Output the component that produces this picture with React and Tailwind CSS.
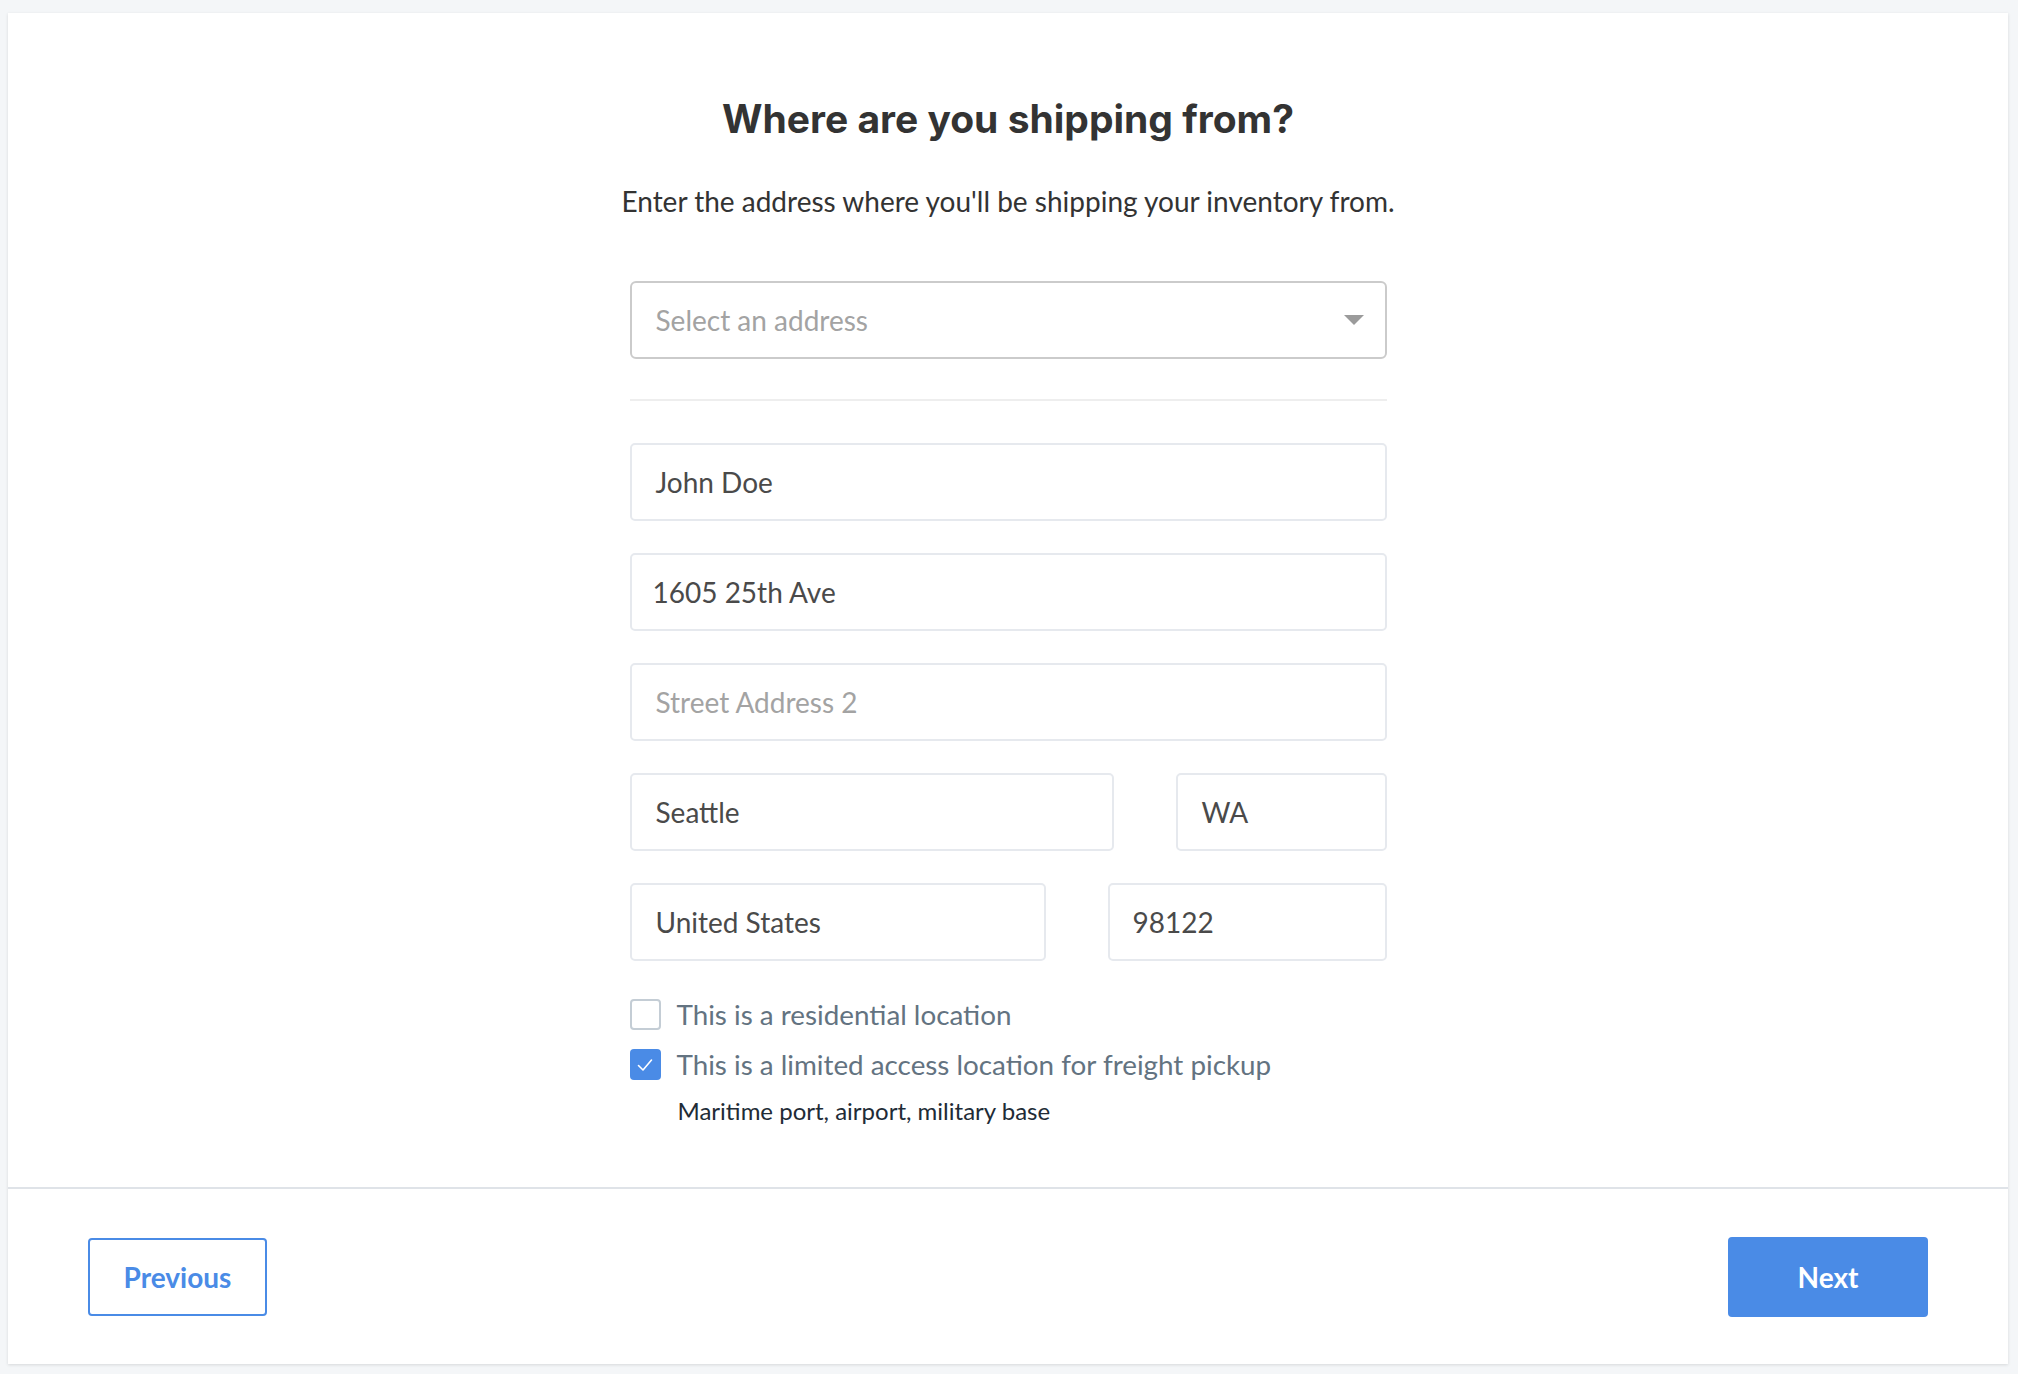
import React, { useState } from 'react';

const lato = { fontFamily: 'Lato, "Noto Sans", sans-serif' };

const Field = ({ value, placeholder, className = '' }) => (
  <div
    className={`h-[78px] flex items-center px-[24px] border-2 border-[#e6e9ee] rounded-[5px] bg-white text-[28px] ${
      value ? 'text-[#4a4a4a]' : 'text-[#a3a3a3]'
    } ${className}`}
  >
    {value || placeholder}
  </div>
);

const Checkbox = ({ checked, onChange, label }) => (
  <button type="button" onClick={onChange} className="flex items-center gap-[16px] text-left">
    <span
      className={`w-[31px] h-[31px] rounded-[4px] flex items-center justify-center ${
        checked ? 'bg-[#4a8be6]' : 'border-2 border-[#c4cdd5] bg-white'
      }`}
    >
      {checked && (
        <svg width="20" height="20" viewBox="0 0 20 20" fill="none">
          <path d="M3.5 10.5l4.5 4.5 8.5-10" stroke="white" strokeWidth="1.6" strokeLinecap="round" strokeLinejoin="round" />
        </svg>
      )}
    </span>
    <span className="text-[27.8px] leading-[31px] text-[#637381]">{label}</span>
  </button>
);

export default function App() {
  const [residential, setResidential] = useState(false);
  const [limited, setLimited] = useState(true);

  return (
    <div className="w-full h-screen bg-[#f4f6f8] pt-[13px] pl-[8px] pr-[10px] pb-[10px]" style={lato}>
      <div className="h-full bg-white flex flex-col shadow-[0_1px_3px_rgba(0,0,0,0.12)]">
        <div className="flex-1 flex flex-col items-center pt-[84px]">
          <h1
            className="text-[39px] leading-[44px] font-bold text-[#333333]"
            style={{ fontFamily: 'Inter, "Noto Sans", sans-serif' }}
          >
            Where are you shipping from?
          </h1>
          <p className="mt-[44px] text-[28px] leading-[32px] text-[#333333]">
            Enter the address where you'll be shipping your inventory from.
          </p>

          <div className="w-[757px] mt-[64px] flex flex-col">
            <div className="h-[78px] flex items-center justify-between pl-[24px] pr-[21px] border-2 border-[#cbcbcb] rounded-[6px] text-[28px] text-[#a3a3a3]">
              <span>Select an address</span>
              <svg width="20" height="10" viewBox="0 0 20 10">
                <path d="M0 0h20L10 10z" fill="#9b9b9b" />
              </svg>
            </div>

            <div className="h-[2px] bg-[#eeeeee] mt-[40px]" />

            <div className="mt-[42px] flex flex-col gap-[32px]">
              <Field value="John Doe" />
              <Field value="1605 25th Ave" className="pl-[21px]" />
              <Field placeholder="Street Address 2" />
              <div className="flex justify-between">
                <Field value="Seattle" className="w-[484px]" />
                <Field value="WA" className="w-[211px]" />
              </div>
              <div className="flex justify-between">
                <Field value="United States" className="w-[416px]" />
                <Field value="98122" className="w-[279px] pl-[23px]" />
              </div>
            </div>

            <div className="mt-[38px] flex flex-col gap-[19px]">
              <Checkbox
                checked={residential}
                onChange={() => setResidential(!residential)}
                label="This is a residential location"
              />
              <Checkbox
                checked={limited}
                onChange={() => setLimited(!limited)}
                label="This is a limited access location for freight pickup"
              />
            </div>
            <p className="mt-[13px] pl-[48px] text-[24px] text-[#212b36]">Maritime port, airport, military base</p>
          </div>
        </div>

        <div className="h-[177px] border-t-2 border-[#dfe3e8] flex items-center justify-between px-[80px]">
          <button className="w-[179px] h-[78px] border-2 border-[#4a8be6] rounded-[4px] text-[28px] font-bold text-[#4a8be6]">
            Previous
          </button>
          <button className="w-[200px] h-[80px] bg-[#4a8be6] rounded-[4px] text-[28px] font-bold text-white">
            Next
          </button>
        </div>
      </div>
    </div>
  );
}
